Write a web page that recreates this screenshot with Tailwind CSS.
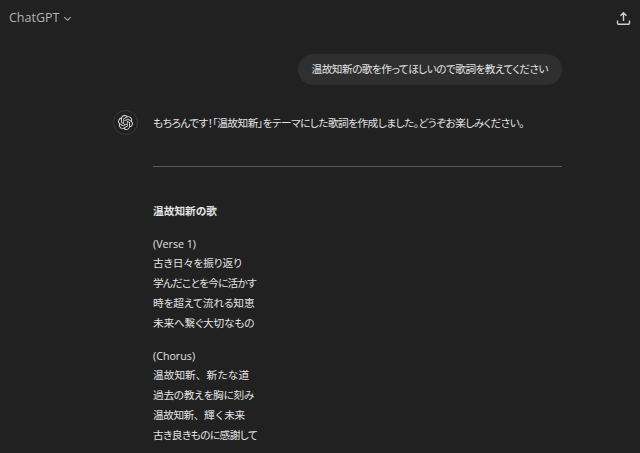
<!DOCTYPE html>
<html lang="ja">
<head>
<meta charset="UTF-8">
<title>ChatGPT</title>
<script src="https://cdn.jsdelivr.net/npm/@tailwindcss/browser@4"></script>
</head>
<body class="h-[453px] overflow-hidden bg-[#212121] text-[#e3e3e3] font-['Open_Sans','Noto_Sans_CJK_JP',sans-serif] [font-feature-settings:'palt']">
  <!-- top bar -->
  <header class="flex h-[37px] items-center justify-between pl-[9px] pr-[9px]">
    <div class="flex items-center gap-[4px] text-[#b4b4b4]">
      <span class="text-[12.5px] font-medium">ChatGPT</span>
      <svg class="h-[9px] w-[9px]" viewBox="0 0 10 10" fill="none" stroke="currentColor" stroke-width="1.2"><path d="M1.5 3.5 5 7l3.5-3.5"/></svg>
    </div>
    <svg class="h-[15px] w-[15px] text-[#d0d0d0]" viewBox="0 0 15 15" fill="none" stroke="currentColor" stroke-width="1.4"><path d="M7.5 10V2M4.5 4.8 7.5 1.8l3 3M1.5 9.5v2.8c0 .6.4 1 1 1h10c.6 0 1-.4 1-1V9.5"/></svg>
  </header>

  <main class="pl-[113px] pr-[78px]">
    <!-- user message -->
    <div class="mt-[17px] flex justify-end">
      <div class="flex h-[31px] items-center rounded-full bg-[#2f2f2f] px-[14px] text-[10.7px] tracking-[-0.56px]">温故知新の歌を作ってほしいので歌詞を教えてください</div>
    </div>

    <!-- assistant message -->
    <div class="mt-[25px] flex gap-[15px] text-[10.7px] leading-[20px]">
      <div class="flex h-[25px] w-[25px] shrink-0 items-center justify-center rounded-full border border-[#3a3a3a]">
        <svg class="h-[15px] w-[15px]" viewBox="0 0 24 24" fill="#d8d8d8">
          <path d="M22.282 9.821a5.985 5.985 0 0 0-.516-4.91 6.046 6.046 0 0 0-6.51-2.9A6.065 6.065 0 0 0 4.981 4.18a5.985 5.985 0 0 0-3.998 2.9 6.046 6.046 0 0 0 .743 7.097 5.98 5.98 0 0 0 .51 4.911 6.051 6.051 0 0 0 6.515 2.9A5.985 5.985 0 0 0 13.26 24a6.056 6.056 0 0 0 5.772-4.206 5.99 5.99 0 0 0 3.997-2.9 6.056 6.056 0 0 0-.747-7.073zM13.26 22.43a4.476 4.476 0 0 1-2.876-1.04l.141-.081 4.779-2.758a.795.795 0 0 0 .392-.681v-6.737l2.02 1.168a.071.071 0 0 1 .038.052v5.583a4.504 4.504 0 0 1-4.494 4.494zM3.6 18.304a4.47 4.47 0 0 1-.535-3.014l.142.085 4.783 2.759a.771.771 0 0 0 .78 0l5.843-3.369v2.332a.08.08 0 0 1-.033.062L9.74 19.95a4.5 4.5 0 0 1-6.14-1.646zM2.34 7.896a4.485 4.485 0 0 1 2.366-1.973V11.6a.766.766 0 0 0 .388.676l5.815 3.355-2.02 1.168a.076.076 0 0 1-.071 0l-4.83-2.786A4.504 4.504 0 0 1 2.34 7.872zm16.597 3.855l-5.833-3.387L15.119 7.2a.076.076 0 0 1 .071 0l4.83 2.791a4.494 4.494 0 0 1-.676 8.105v-5.678a.79.79 0 0 0-.407-.667zm2.01-3.023l-.141-.085-4.774-2.782a.776.776 0 0 0-.785 0L9.409 9.23V6.897a.066.066 0 0 1 .028-.061l4.83-2.787a4.5 4.5 0 0 1 6.68 4.66zm-12.64 4.135l-2.02-1.164a.08.08 0 0 1-.038-.057V6.075a4.5 4.5 0 0 1 7.375-3.453l-.142.08L8.704 5.46a.795.795 0 0 0-.393.681zm1.097-2.365l2.602-1.5 2.607 1.5v2.999l-2.597 1.5-2.607-1.5Z"/>
        </svg>
      </div>
      <div class="min-w-0 flex-1 pt-[3px]">
        <p class="whitespace-nowrap tracking-[-0.55px]">もちろんです！「温故知新」をテーマにした歌詞を作成しました。どうぞお楽しみください。</p>
        <hr class="mt-[33px] border-[#5a5a5a]">
        <p class="mt-[34px] font-bold">温故知新の歌</p>
        <div class="mt-[13px]">
          <p>(Verse 1)</p>
          <p class="-mt-[1px] tracking-[-0.1px]">古き日々を振り返り</p>
          <p class="tracking-[-0.8px]">学んだことを今に活かす</p>
          <p class="tracking-[-0.1px]">時を超えて流れる知恵</p>
          <p class="tracking-[-0.2px]">未来へ繋ぐ大切なもの</p>
        </div>
        <div class="mt-[13px]">
          <p>(Chorus)</p>
          <p class="-mt-[1px] [font-feature-settings:normal]">温故知新、新たな道</p>
          <p class="tracking-[-0.3px]">過去の教えを胸に刻み</p>
          <p class="tracking-[-0.5px] [font-feature-settings:normal]">温故知新、輝く未来</p>
          <p class="tracking-[-0.6px]">古き良きものに感謝して</p>
        </div>
      </div>
    </div>
  </main>
</body>
</html>
